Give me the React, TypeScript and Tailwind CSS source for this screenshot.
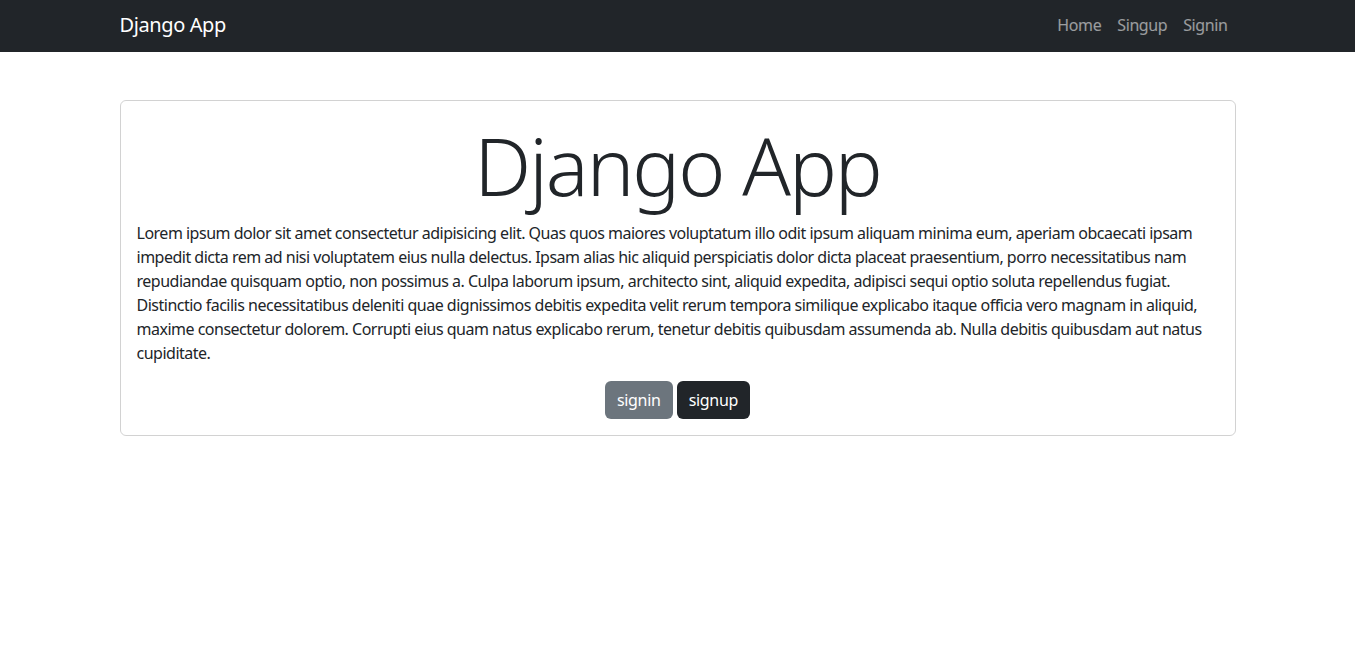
const lorem =
  "Lorem ipsum dolor sit amet consectetur adipisicing elit. Quas quos maiores voluptatum illo odit ipsum aliquam minima eum, aperiam obcaecati ipsam impedit dicta rem ad nisi voluptatem eius nulla delectus. Ipsam alias hic aliquid perspiciatis dolor dicta placeat praesentium, porro necessitatibus nam repudiandae quisquam optio, non possimus a. Culpa laborum ipsum, architecto sint, aliquid expedita, adipisci sequi optio soluta repellendus fugiat. Distinctio facilis necessitatibus deleniti quae dignissimos debitis expedita velit rerum tempora similique explicabo itaque officia vero magnam in aliquid, maxime consectetur dolorem. Corrupti eius quam natus explicabo rerum, tenetur debitis quibusdam assumenda ab. Nulla debitis quibusdam aut natus cupiditate.";

const links = ["Home", "Singup", "Signin"];

export default function App() {
  return (
    <div
      className="min-h-screen bg-white text-[#212529] text-base leading-6"
      style={{ fontFamily: '"Noto Sans", "Open Sans", sans-serif' }}
    >
      <nav className="h-[52px] bg-[#212529]">
        <div className="w-[1140px] mx-auto px-3 h-full flex items-center justify-between">
          <a href="#" className="text-white text-xl leading-[30px] tracking-[-0.4px] -mt-0.5">
            Django App
          </a>
          <ul className="flex items-center -mt-0.5">
            {links.map((l) => (
              <li key={l}>
                <a href="#" className="block px-2 py-2 text-white/55 tracking-[-0.4px]">
                  {l}
                </a>
              </li>
            ))}
          </ul>
        </div>
      </nav>

      <main className="w-[1140px] mx-auto px-3 mt-12">
        <div className="border border-black/[0.175] rounded-md p-4">
          <h1 className="text-[80px] leading-[96px] font-light text-center mb-2 tracking-[-2px]">
            Django App
          </h1>
          <p className="mb-4 tracking-[-0.5px]">{lorem}</p>
          <div className="flex justify-center gap-1">
            <button className="bg-[#6c757d] text-white rounded-md px-3 py-1.5 leading-[26px] tracking-[-0.3px]">
              signin
            </button>
            <button className="bg-[#212529] text-white rounded-md px-3 py-1.5 leading-[26px] tracking-[-0.3px]">
              signup
            </button>
          </div>
        </div>
      </main>
    </div>
  );
}
